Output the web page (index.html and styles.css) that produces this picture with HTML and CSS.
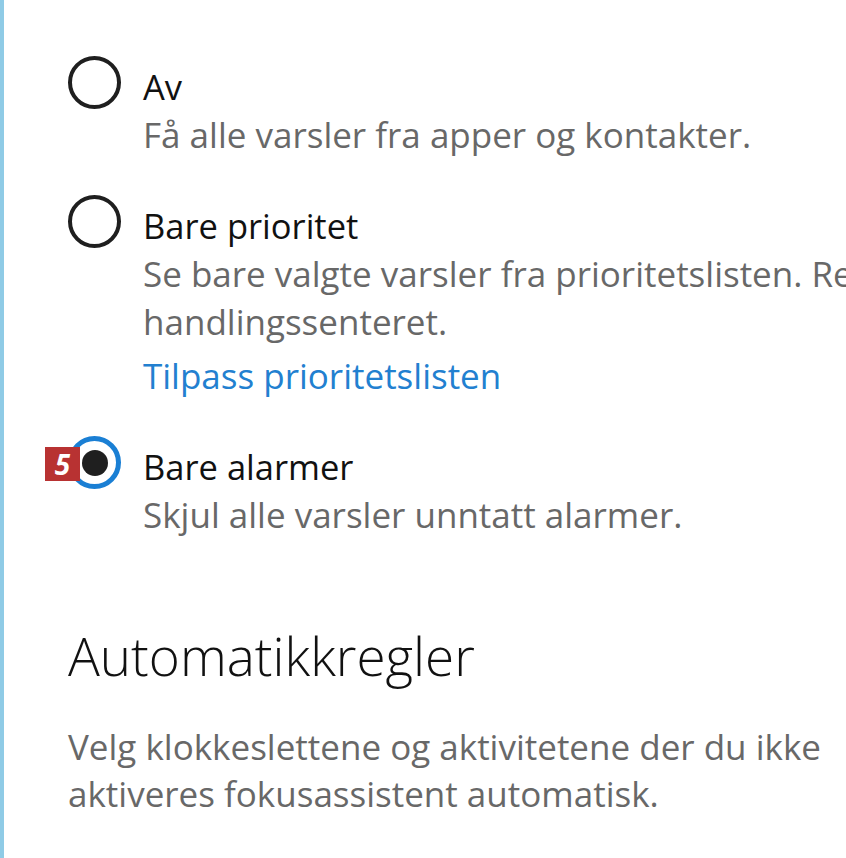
FILE: index.html
```html
<!DOCTYPE html>
<html lang="no">
<head>
<meta charset="utf-8">
<title>Fokusassistent</title>
<link rel="stylesheet" href="styles.css">
</head>
<body>
<div class="page">
  <div class="options">
    <div class="option">
      <span class="radio"></span>
      <div class="text">
        <div class="title">Av</div>
        <div class="desc">Få alle varsler fra apper og kontakter.</div>
      </div>
    </div>
    <div class="option">
      <span class="radio"></span>
      <div class="text">
        <div class="title">Bare prioritet</div>
        <div class="desc">
          <span class="line">Se bare valgte varsler fra prioritetslisten. Re</span>
          <span class="line">handlingssenteret.</span>
        </div>
        <a class="link" href="#">Tilpass prioritetslisten</a>
      </div>
    </div>
    <div class="option">
      <span class="radio checked"><span class="badge">5</span></span>
      <div class="text">
        <div class="title">Bare alarmer</div>
        <div class="desc">Skjul alle varsler unntatt alarmer.</div>
      </div>
    </div>
  </div>
  <h2 class="heading">Automatikkregler</h2>
  <p class="section-desc">
    <span class="line">Velg klokkeslettene og aktivitetene der du ikke</span>
    <span class="line">aktiveres fokusassistent automatisk.</span>
  </p>
</div>
</body>
</html>
```
FILE: styles.css
```css
html, body {
  margin: 0;
  padding: 0;
  background: #ffffff;
  overflow: hidden;
}
body {
  width: 846px;
  height: 858px;
  font-family: "Open Sans", "Noto Sans", sans-serif;
  color: #000;
}
.page {
  box-sizing: border-box;
  height: 858px;
  border-left: 4px solid #8fcbe6;
  padding: 56px 0 0 64px;
  overflow: hidden;
  white-space: nowrap;
}
.options {
  display: flex;
  flex-direction: column;
  gap: 36px;
}
.option {
  display: flex;
  align-items: flex-start;
  gap: 22px;
}
.radio {
  position: relative;
  flex: none;
  box-sizing: border-box;
  width: 53px;
  height: 53px;
  border: 4.5px solid #1f1f1f;
  border-radius: 50%;
}
.radio.checked {
  border-color: #1a7fd4;
  border-width: 5px;
}
.radio.checked::after {
  content: "";
  position: absolute;
  left: 50%;
  top: 50%;
  width: 26px;
  height: 26px;
  margin: -13px 0 0 -13px;
  border-radius: 50%;
  background: #1f1f1f;
}
.badge {
  position: absolute;
  left: -28px;
  top: 6px;
  width: 35px;
  height: 34px;
  background: #b83232;
  color: #fff;
  font-family: "Open Sans", sans-serif;
  font-weight: 700;
  font-style: italic;
  font-size: 28px;
  line-height: 34px;
  text-align: center;
  z-index: 1;
}
.text {
  display: flex;
  flex-direction: column;
  padding-top: 7px;
}
.title {
  font-size: 34.5px;
  line-height: 48px;
  color: #111;
}
.desc {
  font-size: 35px;
  line-height: 48px;
  color: #686868;
}
.line {
  display: block;
}
.link {
  margin-top: 6px;
  font-size: 35px;
  line-height: 48px;
  color: #2280d0;
  text-decoration: none;
}
.heading {
  margin: 85px 0 0;
  font-size: 53px;
  font-weight: 300;
  line-height: 64px;
  color: #111;
}
.section-desc {
  margin: 35px 0 0;
  font-size: 35px;
  line-height: 47px;
  color: #686868;
}
```
